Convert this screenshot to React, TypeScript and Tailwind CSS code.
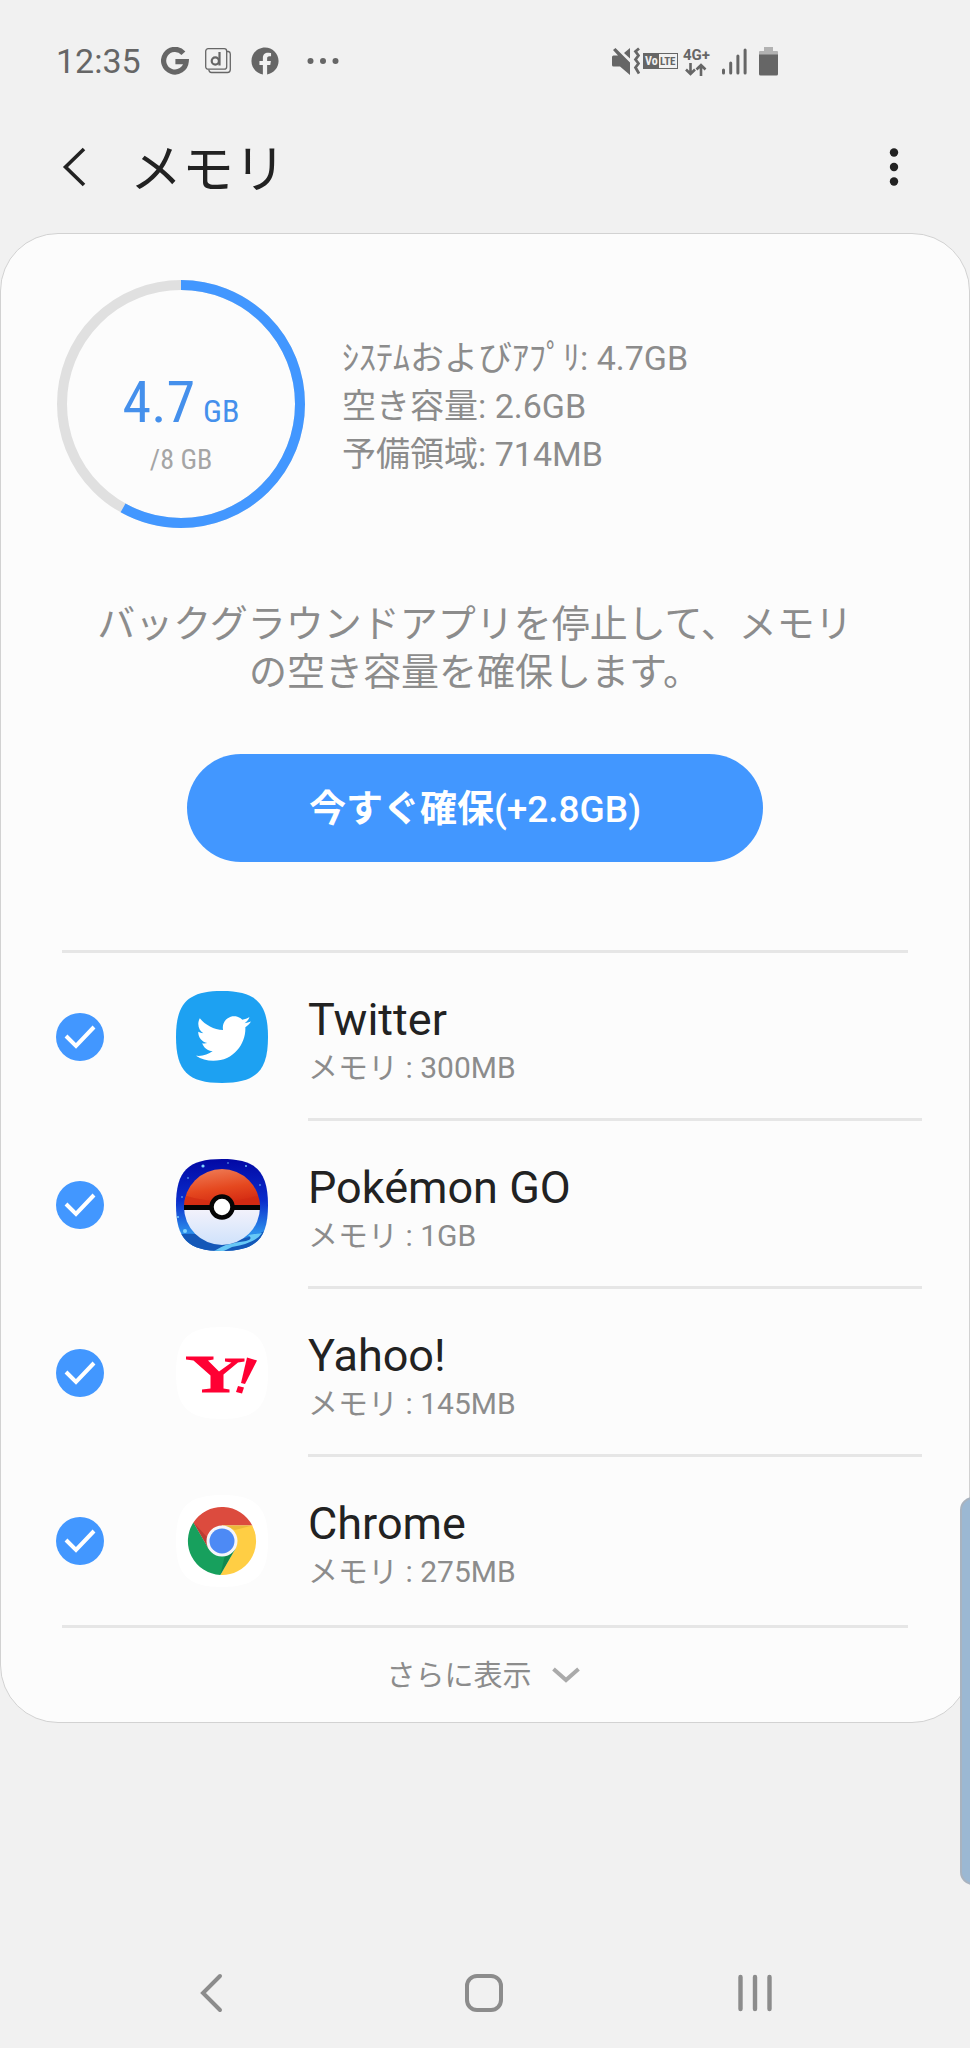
import React, { useState } from "react"
import { FaFacebook, FaTwitter } from "react-icons/fa"

const apps = [
  { id: "twitter", name: "Twitter", memory: "300MB", icon: TwitterIcon },
  { id: "pokemon", name: "Pokémon GO", memory: "1GB", icon: PokemonIcon },
  { id: "yahoo", name: "Yahoo!", memory: "145MB", icon: YahooIcon },
  { id: "chrome", name: "Chrome", memory: "275MB", icon: ChromeIcon },
]

const SQUIRCLE = "M0-46C34-46 46-34 46 0S34 46 0 46-46 34-46 0-34-46 0-46Z"

function TwitterIcon() {
  return (
    <svg viewBox="-46 -46 92 92" className="size-[92px]" aria-hidden="true">
      <path d={SQUIRCLE} fill="#1da1f2" />
      <FaTwitter x={-26} y={-26} size={55} color="#fff" />
    </svg>
  )
}

function PokemonIcon() {
  return (
    <svg viewBox="-46 -46 92 92" className="size-[92px]" aria-hidden="true">
      <defs>
        <clipPath id="pk-clip">
          <path d={SQUIRCLE} />
        </clipPath>
        <linearGradient id="pk-sky" x1="0" y1="0" x2="0" y2="1">
          <stop offset="0" stopColor="#0208a4" />
          <stop offset="0.45" stopColor="#0a2ccb" />
          <stop offset="0.8" stopColor="#2c8fec" />
          <stop offset="1" stopColor="#1264c4" />
        </linearGradient>
        <linearGradient id="pk-red" x1="0" y1="0" x2="0.3" y2="1">
          <stop offset="0" stopColor="#f0825c" />
          <stop offset="0.6" stopColor="#e5481f" />
          <stop offset="1" stopColor="#d42a12" />
        </linearGradient>
        <linearGradient id="pk-white" x1="0" y1="0" x2="0" y2="1">
          <stop offset="0" stopColor="#f5f3fb" />
          <stop offset="1" stopColor="#cfe2fb" />
        </linearGradient>
      </defs>
      <g clipPath="url(#pk-clip)">
        <rect x="-46" y="-46" width="92" height="92" fill="url(#pk-sky)" />
        <path d="M-46 30Q-20 26 4 36Q30 34 46 24V46H-46Z" fill="#1458b8" />
        <path d="M26 30L40 28Q34 38 10 42L2 46H-8Q4 38 24 36Q32 34 26 30Z" fill="#67c8f6" />
        <g fill="#7fd4ff">
          <circle cx="-19" cy="-39" r="1.6" />
          <circle cx="-37" cy="26" r="2" />
          <circle cx="24" cy="-39" r="0.9" />
          <circle cx="38" cy="-20" r="0.8" />
          <circle cx="-40" cy="-8" r="0.8" />
          <circle cx="-34" cy="-27" r="0.8" />
          <circle cx="6" cy="-42" r="0.7" />
          <circle cx="-44" cy="12" r="1" />
        </g>
      </g>
      <path d="M-38 2A38 38 0 0 1 38 2Z" fill="url(#pk-red)" />
      <path d="M-38 2A38 38 0 0 0 38 2Z" fill="url(#pk-white)" />
      <path d="M-38 0Q-37-9-35-9Q-20-4 0-4T35-9Q37-6 38 0Z" fill="#d02a12" opacity="0.6" />
      <rect x="-38" y="0" width="76" height="5" fill="#050505" />
      <circle cx="0" cy="2" r="10.5" fill="#fff" stroke="#050505" strokeWidth="4.5" />
    </svg>
  )
}

function YahooIcon() {
  return (
    <svg viewBox="-46 -46 92 92" className="size-[92px]" aria-hidden="true">
      <path d={SQUIRCLE} fill="#fff" />
      <g fill="#ff0033">
        <path d="M-36-16.500H-8.500V-13.500L-14-12.500L-3-1.500L9.500-10.500L3-11.500V-14.500H22.500V-11.500L16-10.500L1.500 1.500V15.500L7.500 16.500V19.500H-20V16.500L-11.500 15.500V2.500L-28.500-12.500L-36-13.500Z" />
        <path d="M25-15.500L35-12.500L23 11L19 10Z" />
        <path d="M16 13L22 14.500L20 20.500L14 19Z" />
      </g>
    </svg>
  )
}

function ChromeIcon() {
  return (
    <svg viewBox="-46 -46 92 92" className="size-[92px]" aria-hidden="true">
      <path d={SQUIRCLE} fill="#fff" />
      <path d="M-28.600-18.500A34 34 0 0 1 30.300-15.500H0L-13.400 7.750Z" fill="#dc4b3e" />
      <path d="M30.300-15.500A34 34 0 0 1-1.700 34L13.400 7.750L0-15.500Z" fill="#ffce44" />
      <path d="M-1.700 34A34 34 0 0 1-28.600-18.500L-13.400 7.750L13.400 7.750Z" fill="#17a05d" />
      <path d="M0-15.500H30.300L13 -11Z" fill="#d9a52e" opacity="0.5" />
      <path d="M-28.600-18.500L-13.400 7.750L-15-4Z" fill="#9c2e25" opacity="0.5" />
      <path d="M13.400 7.750L-1.700 34L3 14Z" fill="#0c7040" opacity="0.5" />
      <circle r="15.500" fill="#f5f6fa" />
      <circle r="12.500" fill="#4d8af5" />
    </svg>
  )
}

function StatusBar() {
  return (
    <div className="flex h-[122px] items-center pr-[192px] pl-14 text-[#666]">
      <span className="text-[34px] leading-10">12:35</span>
      <svg viewBox="0 0 28 28" className="ml-5 size-7" aria-label="Google">
        <path
          d="M22.400 6.200A11.300 11.300 0 1 0 25.200 14.600H14.400"
          fill="none"
          stroke="currentColor"
          strokeWidth="5.200"
        />
      </svg>
      <svg viewBox="0 0 26 28" className="ml-4 h-7 w-[26px]" aria-label="d">
        <path d="M22 4.500H23.500Q25.300 5 25.300 7V22.500Q25.300 25.500 22.500 25.500H6.500Q4 25.500 3.800 22.500" fill="none" stroke="currentColor" strokeWidth="1.300" />
        <rect x="0.700" y="1.700" width="21" height="20.500" rx="2.500" fill="none" stroke="currentColor" strokeWidth="1.300" />
        <circle cx="10.300" cy="14" r="3.600" fill="none" stroke="currentColor" strokeWidth="2.200" />
        <path d="M14.500 5V18.500" stroke="currentColor" strokeWidth="2.200" />
      </svg>
      <FaFacebook className="ml-5 size-7" aria-label="Facebook" />
      <svg viewBox="0 0 32 8" className="ml-7 h-2 w-8" aria-hidden="true" fill="currentColor">
        <circle cx="3.500" cy="4" r="3" />
        <circle cx="16" cy="4" r="3" />
        <circle cx="28.500" cy="4" r="3" />
      </svg>

      <div className="ml-auto flex items-center">
        <svg viewBox="0 0 28 28" className="size-7" aria-label="バイブ" fill="currentColor">
          <path d="M0 10Q0 8.500 1.500 8.500H6L1 3L3.500 1L18 15.500V28L8 19.500H1.500Q0 19.500 0 18Z" />
          <path d="M12 6L18 1V11.500Z" />
          <path d="M27 1.500L23.500 4.500L26.500 8.500L23.500 12.500L26.500 16.500L23.500 20.500L27 26.500" fill="none" stroke="currentColor" strokeWidth="2.800" />
        </svg>
        <svg viewBox="0 0 35 16" className="ml-[3px] h-4 w-[35px] font-['Roboto_Condensed','Roboto',sans-serif]" aria-label="VoLTE">
          <rect x="0.500" y="0.500" width="34" height="15" fill="#f1f1f1" stroke="currentColor" />
          <rect width="16" height="16" fill="currentColor" />
          <text x="2" y="12" fontSize="12" fontWeight="700" fill="#f1f1f1">Vo</text>
          <text x="17" y="12" fontSize="11" fontWeight="700" fill="currentColor">LTE</text>
        </svg>
        <div className="ml-[5px] flex flex-col items-center">
          <span className="text-[15px] leading-4 font-bold">4G+</span>
          <svg viewBox="0 0 22 13" className="h-[13px] w-[22px]" aria-hidden="true" fill="none" stroke="currentColor" strokeWidth="2.600">
            <path d="M5.500 0V11M1 6.500L5.500 11L10 6.500M16 13V2M11.500 6.500L16 2L20.500 6.500" />
          </svg>
        </div>
        <svg viewBox="0 0 25 28" className="ml-3 h-7 w-[25px]" aria-label="電波" stroke="currentColor" strokeWidth="3" strokeLinecap="round">
          <path d="M1.500 23V26M8.700 16V26M15.900 9V26M23.100 3V26" />
        </svg>
        <svg viewBox="0 0 19 30" className="ml-3 h-[30px] w-[19px]" aria-label="電池" fill="currentColor">
          <path d="M5 1H14V5H18Q19 5 19 6V9H0V6Q0 5 1 5H5Z" opacity="0.450" />
          <path d="M0 8.500H19V28Q19 29.500 17.500 29.500H1.500Q0 29.500 0 28Z" />
        </svg>
      </div>
    </div>
  )
}

function UsageRing({ ratio }: { ratio: number }) {
  return (
    <div className="relative size-[248px] shrink-0">
      <svg viewBox="0 0 248 248" className="size-full -rotate-90" fill="none" strokeWidth="10" aria-hidden="true">
        <circle cx="124" cy="124" r="119" stroke="#e0e0e0" />
        <circle
          cx="124"
          cy="124"
          r="119"
          stroke="#4297ff"
          pathLength={100}
          strokeDasharray={`${ratio * 100} 100`}
        />
      </svg>
      <div className="absolute inset-0 flex flex-col items-center pt-[92px] font-['Roboto_Condensed','Roboto',sans-serif]">
        <p className="flex items-baseline gap-2 text-[58px] leading-[60px] text-[#4590ec]">
          4.7 <span className="text-[32px] leading-none">GB</span>
        </p>
        <p className="mt-2 text-[28px] leading-10 text-[#a5a5a5]">/8 GB</p>
      </div>
    </div>
  )
}

export default function App() {
  const [checked, setChecked] = useState<string[]>(apps.map((a) => a.id))

  const toggle = (id: string) => {
    setChecked((prev) => (prev.includes(id) ? prev.filter((x) => x !== id) : [...prev, id]))
  }

  return (
    <div className="relative flex min-h-screen flex-col overflow-hidden bg-[#f1f1f1] font-['Roboto','Noto_Sans_CJK_JP',sans-serif]" lang="ja">
      <StatusBar />

      {/* Title bar */}
      <header className="mb-[21px] flex h-[90px] items-center pr-[68px] pl-[60px] text-[#222]">
        <button type="button" aria-label="戻る">
          <svg viewBox="0 0 28 40" className="h-10 w-7" fill="none" stroke="currentColor" strokeWidth="3.600">
            <path d="M24 2L5.500 20L24 38" />
          </svg>
        </button>
        <h1 className="ml-[42px] pt-2 text-[52px] leading-[60px]">メモリ</h1>
        <button type="button" className="ml-auto" aria-label="その他のオプション">
          <svg viewBox="0 0 16 40" className="h-10 w-4" fill="currentColor">
            <circle cx="8" cy="5.500" r="4.200" />
            <circle cx="8" cy="20" r="4.200" />
            <circle cx="8" cy="34.500" r="4.200" />
          </svg>
        </button>
      </header>

      <main className="rounded-[58px] border border-[#d2d2d2] bg-[#fcfcfc] text-[#8c8c8c]">
        {/* Usage summary */}
        <section className="flex items-center gap-[37px] pt-[46px] pl-14">
          <UsageRing ratio={0.581} />
          <div className="pt-1 text-[34px] leading-[48px]">
            <p>ｼｽﾃﾑおよびｱﾌﾟﾘ: 4.7GB</p>
            <p>空き容量: 2.6GB</p>
            <p>予備領域: 714MB</p>
          </div>
        </section>

        <section className="mt-[72px] flex flex-col items-center pr-[108px] pl-[88px]">
          <p className="text-center text-[38px] leading-[48px]">
            バックグラウンドアプリを停止して、メモリの空き容量を確保します。
          </p>
          <button
            type="button"
            className="mt-[58px] h-[108px] w-full max-w-[576px] rounded-full bg-[#4297ff] pt-1 text-[37px] font-bold text-white"
          >
            今すぐ確保<span className="font-medium">(+2.8GB)</span>
          </button>
        </section>

        {/* App list */}
        <ul className="mx-[61px] mt-[88px] border-y-3 border-[#e6e6e6]">
          {apps.map((app, i) => (
            <li key={app.id} className="-mr-[14px] -ml-[6px]">
              <label className="flex h-[168px] items-stretch">
                <span className="relative flex w-12 shrink-0 items-center pb-px">
                  <input
                    type="checkbox"
                    checked={checked.includes(app.id)}
                    onChange={() => toggle(app.id)}
                    className="peer size-12 appearance-none rounded-full border-3 border-[#b5b5b5] checked:border-0 checked:bg-[#4297ff]"
                  />
                  <svg
                    viewBox="0 0 48 48"
                    className="pointer-events-none absolute left-0 hidden size-12 peer-checked:block"
                    fill="none"
                    stroke="#fff"
                    strokeWidth="4"
                  >
                    <path d="M10 23L20 33L38 14" />
                  </svg>
                </span>
                <span className="ml-[72px] flex items-center pb-px">
                  <app.icon />
                </span>
                <span
                  className={
                    i < apps.length - 1
                      ? "ml-10 flex flex-1 flex-col justify-center border-b-3 border-[#e6e6e6] pt-2"
                      : "ml-10 flex flex-1 flex-col justify-center border-b-3 border-transparent pt-2"
                  }
                >
                  <span className="text-[45px] leading-14 text-[#222]">{app.name}</span>
                  <span className="text-[30px] leading-10">メモリ : {app.memory}</span>
                </span>
              </label>
            </li>
          ))}
        </ul>

        <button type="button" className="flex h-[94px] w-full items-center justify-center gap-5 pr-1 text-[29px]">
          <span className="pt-1">さらに表示</span>
          <svg viewBox="0 0 28 16" className="h-4 w-7" fill="none" stroke="#aaa" strokeWidth="4">
            <path d="M1.500 2L14 13L26.500 2" />
          </svg>
        </button>
      </main>

      {/* Edge panel handle */}
      <div className="absolute top-[1497px] -right-4 h-[388px] w-[26px] rounded-2xl border-2 border-[#a9b3bf] bg-[#9bb8d3]" />

      <nav className="mt-auto flex h-[110px] items-center justify-between pr-[195px] pl-[192px] text-[#8c8c8c]">
        <button type="button" aria-label="戻る">
          <svg viewBox="0 0 40 40" className="size-10" fill="none" stroke="currentColor" strokeWidth="4" strokeLinecap="round">
            <path d="M28 3L11 20L28 37" />
          </svg>
        </button>
        <button type="button" aria-label="ホーム">
          <svg viewBox="0 0 40 40" className="size-10" fill="none" stroke="currentColor" strokeWidth="4">
            <rect x="3" y="3" width="34" height="34" rx="10" />
          </svg>
        </button>
        <button type="button" aria-label="履歴">
          <svg viewBox="0 0 40 40" className="size-10" stroke="currentColor" strokeWidth="4.400" strokeLinecap="round">
            <path d="M5.500 4V36M20 4V36M34.500 4V36" />
          </svg>
        </button>
      </nav>
    </div>
  )
}
